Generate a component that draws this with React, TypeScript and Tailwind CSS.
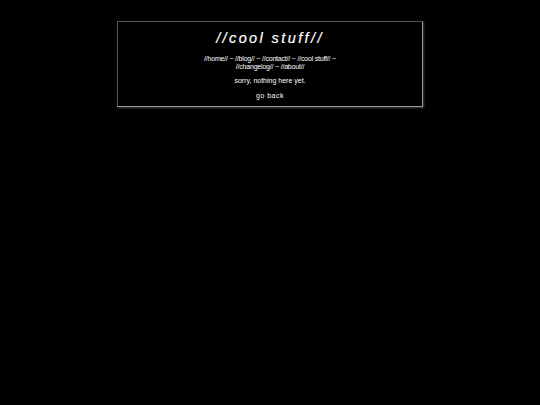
import React from 'react';

export default function App() {
  return (
    <div className="min-h-[405px] bg-black pt-[21px] font-['Liberation_Sans',Arial,sans-serif] text-white">
      <div className="mx-auto w-[306px] border border-t-[#555] border-l-[#555] border-r-[#999] border-b-[#999] bg-black px-4 pt-[8px] pb-[6px] text-center shadow-[1px_1px_2px_rgba(255,255,255,0.25)]">
        <h1 className="text-[14.5px] italic leading-[16px] tracking-[2.4px] [-webkit-text-stroke:0.2px_white]">//cool stuff//</h1>
        <nav className="mx-auto mt-[9px] w-[150px] text-[7px] leading-[8px] tracking-[-0.2px]">
          <a href="#">//home//</a> ~ <a href="#">//blog//</a> ~ <a href="#">//contact//</a> ~ <a href="#">//cool stuff//</a> ~ <a href="#">//changelog//</a> ~ <a href="#">//about//</a>
        </nav>
        <p className="mt-[5px] text-[7px] leading-[9px]">sorry, nothing here yet.</p>
        <p className="mt-[6px] text-[7px] leading-[9px] tracking-[0.5px]">
          <a href="#">go back</a>
        </p>
      </div>
    </div>
  );
}
